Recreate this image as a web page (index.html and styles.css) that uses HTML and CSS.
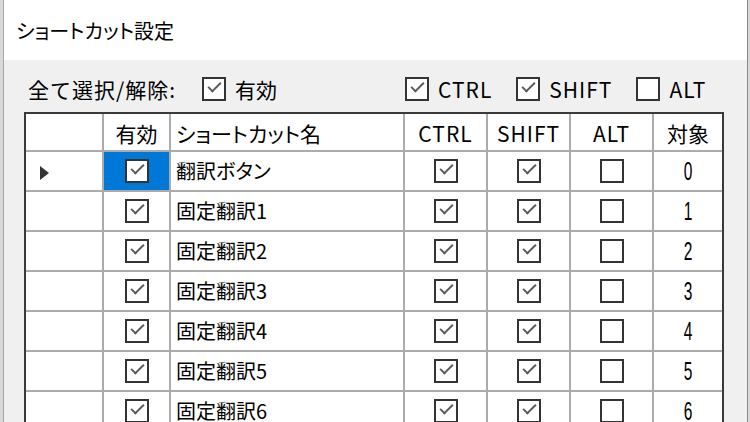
FILE: index.html
```html
<!DOCTYPE html>
<html lang="ja">
<head>
<meta charset="utf-8">
<title>ショートカット設定</title>
<link rel="stylesheet" href="styles.css">
</head>
<body>
<div class="window">
  <div class="titlebar"><span class="title">ショートカット設定</span></div>
  <div class="body">
    <div class="toolbar">
      <div class="left-group">
        <span class="lbl">全て選択/解除:</span>
        <span class="item"><span class="cb on"></span><span>有効</span></span>
      </div>
      <div class="mods">
        <span class="item"><span class="cb on"></span><span class="lat">CTRL</span></span>
        <span class="item"><span class="cb on"></span><span class="lat">SHIFT</span></span>
        <span class="item"><span class="cb"></span><span class="lat">ALT</span></span>
      </div>
    </div>
    <div class="grid">
      <div class="c rh hd"></div>
      <div class="c hd ctr">有効</div>
      <div class="c hd name">ショートカット名</div>
      <div class="c hd ctr lat">CTRL</div>
      <div class="c hd ctr lat">SHIFT</div>
      <div class="c hd ctr lat">ALT</div>
      <div class="c hd ctr last">対象</div>

      <div class="c rh"><span class="arrow"></span></div>
      <div class="c ctr sel"><span class="cb on"></span></div>
      <div class="c name">翻訳ボタン</div>
      <div class="c ctr"><span class="cb on"></span></div>
      <div class="c ctr"><span class="cb on"></span></div>
      <div class="c ctr"><span class="cb"></span></div>
      <div class="c ctr last"><span class="num">0</span></div>

      <div class="c rh"></div>
      <div class="c ctr"><span class="cb on"></span></div>
      <div class="c name">固定翻訳1</div>
      <div class="c ctr"><span class="cb on"></span></div>
      <div class="c ctr"><span class="cb on"></span></div>
      <div class="c ctr"><span class="cb"></span></div>
      <div class="c ctr last"><span class="num">1</span></div>

      <div class="c rh"></div>
      <div class="c ctr"><span class="cb on"></span></div>
      <div class="c name">固定翻訳2</div>
      <div class="c ctr"><span class="cb on"></span></div>
      <div class="c ctr"><span class="cb on"></span></div>
      <div class="c ctr"><span class="cb"></span></div>
      <div class="c ctr last"><span class="num">2</span></div>

      <div class="c rh"></div>
      <div class="c ctr"><span class="cb on"></span></div>
      <div class="c name">固定翻訳3</div>
      <div class="c ctr"><span class="cb on"></span></div>
      <div class="c ctr"><span class="cb on"></span></div>
      <div class="c ctr"><span class="cb"></span></div>
      <div class="c ctr last"><span class="num">3</span></div>

      <div class="c rh"></div>
      <div class="c ctr"><span class="cb on"></span></div>
      <div class="c name">固定翻訳4</div>
      <div class="c ctr"><span class="cb on"></span></div>
      <div class="c ctr"><span class="cb on"></span></div>
      <div class="c ctr"><span class="cb"></span></div>
      <div class="c ctr last"><span class="num">4</span></div>

      <div class="c rh"></div>
      <div class="c ctr"><span class="cb on"></span></div>
      <div class="c name">固定翻訳5</div>
      <div class="c ctr"><span class="cb on"></span></div>
      <div class="c ctr"><span class="cb on"></span></div>
      <div class="c ctr"><span class="cb"></span></div>
      <div class="c ctr last"><span class="num">5</span></div>

      <div class="c rh"></div>
      <div class="c ctr"><span class="cb on"></span></div>
      <div class="c name">固定翻訳6</div>
      <div class="c ctr"><span class="cb on"></span></div>
      <div class="c ctr"><span class="cb on"></span></div>
      <div class="c ctr"><span class="cb"></span></div>
      <div class="c ctr last"><span class="num">6</span></div>
    </div>
  </div>
</div>
</body>
</html>
```
FILE: styles.css
```css
* { box-sizing: border-box; }
html, body {
  margin: 0;
  padding: 0;
  width: 750px;
  height: 422px;
  overflow: hidden;
  background: #d8d8d8;
}
body {
  font-family: "Noto Sans CJK JP", "Noto Sans", sans-serif;
  color: #000;
}
.window {
  margin-left: 3px;
  width: 745px;
  height: 422px;
  border-left: 1px solid #a8a8a8;
  border-right: 1px solid #8a8a8a;
  background: #f0f0f0;
  display: flex;
  flex-direction: column;
}
.titlebar {
  height: 60px;
  background: #fff;
  display: flex;
  align-items: center;
  padding-left: 12px;
  flex: none;
}
.title {
  font-size: 20px;
  line-height: 1;
  margin-top: 1px;
  font-feature-settings: "palt";
}
.body {
  flex: 1;
  padding-left: 20px;
  overflow: hidden;
}
.toolbar {
  height: 52px;
  padding-top: 6px;
  display: flex;
  align-items: center;
  font-size: 21px;
  line-height: 1;
}
.left-group {
  width: 381px;
  padding-left: 4px;
  display: flex;
  align-items: center;
}
.lbl {
  width: 174px;
  flex: none;
  white-space: nowrap;
  letter-spacing: 1px;
}
.lat { letter-spacing: 1px; }
.mods {
  display: flex;
  align-items: center;
  gap: 24px;
}
.item {
  display: inline-flex;
  align-items: center;
  gap: 9px;
}
.cb {
  display: inline-block;
  position: relative;
  width: 24px;
  height: 24px;
  border: 2px solid #333;
  background: #fff;
  flex: none;
}
.cb.on::after {
  content: "";
  position: absolute;
  left: 4px;
  top: 3px;
  width: 11px;
  height: 5px;
  box-sizing: content-box;
  border-left: 2px solid #5a5a5a;
  border-bottom: 2px solid #5a5a5a;
  transform: rotate(-45deg);
}
.grid {
  display: grid;
  grid-template-columns: 78px 67px 234px 83px 83px 83px 68px;
  grid-template-rows: 38px;
  grid-auto-rows: 40px;
  width: 700px;
  border: 2px solid #3a3a3a;
  border-bottom: none;
  background: #fff;
  font-size: 20px;
  line-height: 1;
}
.c {
  border-right: 2px solid #ababab;
  border-bottom: 2px solid #ababab;
  display: flex;
  align-items: center;
  background: #fff;
}
.c.last { border-right: none; }
.ctr { justify-content: center; }
.name { padding-left: 5px; font-feature-settings: "palt"; }
.hd { padding-top: 2px; font-size: 21px; }
.num {
  display: inline-block;
  font-family: "Liberation Sans", sans-serif;
  font-size: 25px;
  transform: scaleX(0.62);
  margin-top: 1px;
}
.sel { background: #0078d7; }
.rh { padding-left: 14px; }
.arrow {
  width: 0;
  height: 0;
  border-left: 9px solid #333;
  border-top: 7px solid transparent;
  border-bottom: 7px solid transparent;
  margin-top: 3px;
}
```
